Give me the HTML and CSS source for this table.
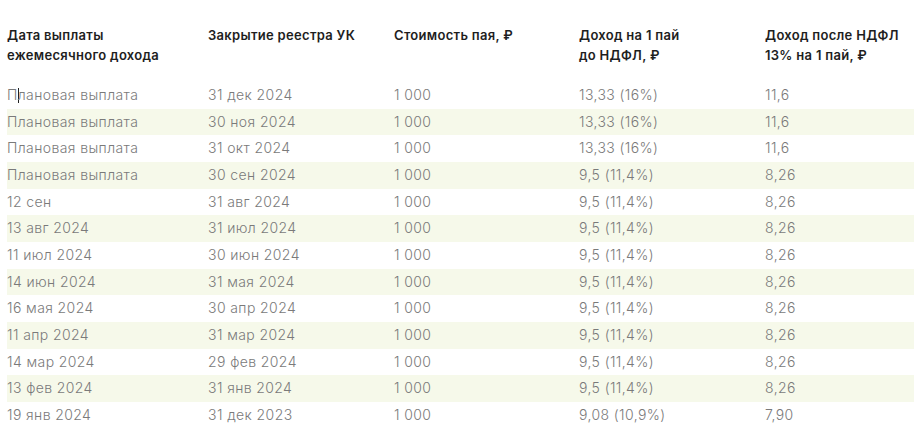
FILE: index.html
```html
<!DOCTYPE html>
<html lang="ru">
<head>
<meta charset="utf-8">
<link rel="stylesheet" href="styles.css">
</head>
<body>
<div class="wrap">
<table class="payouts">
<thead>
<tr>
<th class="c1">Дата выплаты<br>ежемесячного дохода</th>
<th class="c2">Закрытие реестра УК</th>
<th class="c3">Стоимость пая, ₽</th>
<th class="c4">Доход на 1 пай<br>до НДФЛ, ₽</th>
<th class="c5">Доход после НДФЛ<br>13% на 1 пай, ₽</th>
</tr>
</thead>
<tbody>
<tr><td>П<span class="caret"></span>лановая выплата</td><td>31 дек 2024</td><td>1 000</td><td>13,33 (16%)</td><td>11,6</td></tr>
<tr><td>Плановая выплата</td><td>30 ноя 2024</td><td>1 000</td><td>13,33 (16%)</td><td>11,6</td></tr>
<tr><td>Плановая выплата</td><td>31 окт 2024</td><td>1 000</td><td>13,33 (16%)</td><td>11,6</td></tr>
<tr><td>Плановая выплата</td><td>30 сен 2024</td><td>1 000</td><td>9,5 (11,4%)</td><td>8,26</td></tr>
<tr><td>12 сен</td><td>31 авг 2024</td><td>1 000</td><td>9,5 (11,4%)</td><td>8,26</td></tr>
<tr><td>13 авг 2024</td><td>31 июл 2024</td><td>1 000</td><td>9,5 (11,4%)</td><td>8,26</td></tr>
<tr><td>11 июл 2024</td><td>30 июн 2024</td><td>1 000</td><td>9,5 (11,4%)</td><td>8,26</td></tr>
<tr><td>14 июн 2024</td><td>31 мая 2024</td><td>1 000</td><td>9,5 (11,4%)</td><td>8,26</td></tr>
<tr><td>16 мая 2024</td><td>30 апр 2024</td><td>1 000</td><td>9,5 (11,4%)</td><td>8,26</td></tr>
<tr><td>11 апр 2024</td><td>31 мар 2024</td><td>1 000</td><td>9,5 (11,4%)</td><td>8,26</td></tr>
<tr><td>14 мар 2024</td><td>29 фев 2024</td><td>1 000</td><td>9,5 (11,4%)</td><td>8,26</td></tr>
<tr><td>13 фев 2024</td><td>31 янв 2024</td><td>1 000</td><td>9,5 (11,4%)</td><td>8,26</td></tr>
<tr><td>19 янв 2024</td><td>31 дек 2023</td><td>1 000</td><td>9,08 (10,9%)</td><td>7,90</td></tr>
</tbody>
</table>
</div>
</body>
</html>
```
FILE: styles.css
```css
html, body {
  margin: 0;
  padding: 0;
  background: #ffffff;
}
.wrap {
  width: 914px;
  height: 424px;
  overflow: hidden;
  padding: 25px 0 0 7px;
  box-sizing: border-box;
}
.payouts {
  border-collapse: collapse;
  table-layout: fixed;
  width: 960px;
  font-family: Inter, "DejaVu Sans", sans-serif;
}
.payouts th {
  font-size: 13px;
  font-weight: 600;
  color: #1e1e1e;
  text-align: left;
  vertical-align: top;
  line-height: 20px;
  letter-spacing: 0.3px;
  padding: 0 0 17px 0;
}
.payouts .c1 { width: 201px; }
.payouts .c2 { width: 186px; }
.payouts .c3 { width: 185px; }
.payouts .c4 { width: 186px; }
.payouts .c5 { width: 202px; }
.payouts td {
  font-size: 14px;
  font-weight: 300;
  color: #7a7a7a;
  letter-spacing: 0.4px;
  height: 26.67px;
  padding: 0;
  line-height: 26.67px;
  white-space: nowrap;
}
.payouts tbody tr:nth-child(even) td {
  background: #f6f9ea;
}
.caret {
  display: inline-block;
  width: 1px;
  height: 15px;
  margin-right: -1px;
  vertical-align: -3px;
  background: #222;
}
```
